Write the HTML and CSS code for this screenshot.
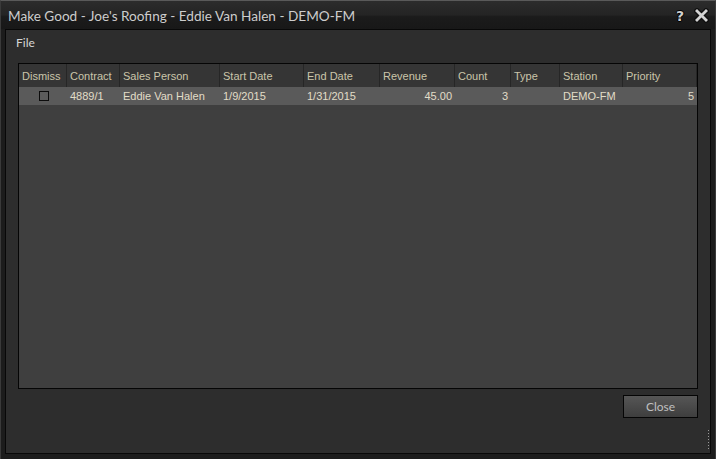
FILE: index.html
```html
<!DOCTYPE html>
<html>
<head>
<meta charset="utf-8">
<link rel="stylesheet" href="styles.css">
</head>
<body>
<div class="window">
  <div class="titlebar">
    <div class="title">Make Good - Joe's Roofing - Eddie Van Halen - DEMO-FM</div>
    <div class="tb-buttons">
      <span class="tb-help">?</span>
      <svg class="tb-close" width="15" height="15" viewBox="0 0 15 15">
        <path d="M3 3 L12 12 M12 3 L3 12" stroke="#111" stroke-width="5.5" stroke-linecap="square"/>
        <path d="M3 3 L12 12 M12 3 L3 12" stroke="#d4d4d4" stroke-width="2.8" stroke-linecap="square"/>
      </svg>
    </div>
  </div>
  <div class="panel">
    <div class="menubar"><span class="menu-item">File</span></div>
    <div class="grid">
      <div class="row head">
        <div class="cell">Dismiss</div>
        <div class="cell">Contract</div>
        <div class="cell">Sales Person</div>
        <div class="cell">Start Date</div>
        <div class="cell">End Date</div>
        <div class="cell">Revenue</div>
        <div class="cell">Count</div>
        <div class="cell">Type</div>
        <div class="cell">Station</div>
        <div class="cell">Priority</div>
      </div>
      <div class="row data">
        <div class="cell center"><span class="checkbox"></span></div>
        <div class="cell">4889/1</div>
        <div class="cell">Eddie Van Halen</div>
        <div class="cell">1/9/2015</div>
        <div class="cell">1/31/2015</div>
        <div class="cell right">45.00</div>
        <div class="cell right">3</div>
        <div class="cell"></div>
        <div class="cell">DEMO-FM</div>
        <div class="cell right">5</div>
      </div>
    </div>
    <div class="footer">
      <button class="btn">Close</button>
    </div>
    <div class="grip"></div>
  </div>
</div>
</body>
</html>
```
FILE: styles.css
```css
html, body {
  margin: 0;
  padding: 0;
  background: #1a1a1a;
}
.window {
  width: 716px;
  height: 459px;
  box-sizing: border-box;
  background: #1c1c1c;
  border-top: 1px solid #5a5a5a;
  border-left: 1px solid #3a3a3a;
  border-right: 1px solid #3a3a3a;
  display: flex;
  flex-direction: column;
  font-family: "Liberation Sans", Arial, sans-serif;
}
.titlebar {
  height: 28px;
  display: flex;
  align-items: center;
  justify-content: space-between;
  padding: 0 6px 0 7px;
  background: linear-gradient(#2c2c2c 0, #242424 50%, #1b1b1b 56%, #181818 100%);
}
.title {
  font-family: Lato, "Open Sans", sans-serif;
  font-size: 13.6px;
  color: #cdcdcd;
  padding-top: 2px;
}
.tb-buttons {
  display: flex;
  align-items: center;
  gap: 10px;
  padding-top: 1px;
}
.tb-help {
  font-family: "DejaVu Sans", sans-serif;
  font-weight: bold;
  font-size: 14px;
  color: #cfcfcf;
  text-shadow: 1px 0 #000, -1px 0 #000, 0 1px #000, 0 -1px #000;
}
.tb-close { display: block; }
.panel {
  position: relative;
  flex: 1;
  margin: 0 4px 5px 4px;
  border: 1px solid #080808;
  background: #2d2d2d;
  display: flex;
  flex-direction: column;
}
.menubar {
  height: 33px;
  padding-left: 10px;
  display: flex;
  align-items: center;
}
.menu-item {
  font-family: Lato, "Open Sans", sans-serif;
  font-size: 12px;
  color: #d6d6d6;
  margin-top: -9px;
}
.grid {
  margin-left: 12px;
  width: 680px;
  height: 326px;
  box-sizing: border-box;
  border: 1px solid #050505;
  background: #3f3f3f;
}
.row {
  display: grid;
  grid-template-columns: 48px 53px 100px 84px 76px 75px 56px 49px 63px 74px;
}
.head {
  height: 23px;
  background: #353535;
  color: #cbc5aa;
}
.head .cell {
  border-right: 1px solid #262626;
}
.data {
  height: 18px;
  background: #5a5a5a;
  color: #e2ddc8;
}
.cell {
  font-size: 11px;
  padding: 0 3px;
  display: flex;
  align-items: center;
  white-space: nowrap;
  overflow: hidden;
  box-sizing: border-box;
}
.cell.right { justify-content: flex-end; }
.cell.center { justify-content: center; }
.checkbox {
  width: 8px;
  height: 8px;
  border: 1px solid #0c0c0c;
  background: #5c5c5c;
  margin-left: 1px;
}
.footer {
  display: flex;
  justify-content: flex-end;
  padding: 6px 12px 0 0;
}
.btn {
  width: 75px;
  height: 23px;
  border: 1px solid #050505;
  background: linear-gradient(#565656, #3e3e3e);
  color: #c0c0c0;
  font-family: Lato, "Open Sans", sans-serif;
  font-size: 12px;
  padding: 0;
}
.grip {
  position: absolute;
  right: 1px;
  bottom: 2px;
  width: 1px;
  height: 21px;
  background: repeating-linear-gradient(#9a9a9a 0, #9a9a9a 1px, transparent 1px, transparent 3px);
}
```
